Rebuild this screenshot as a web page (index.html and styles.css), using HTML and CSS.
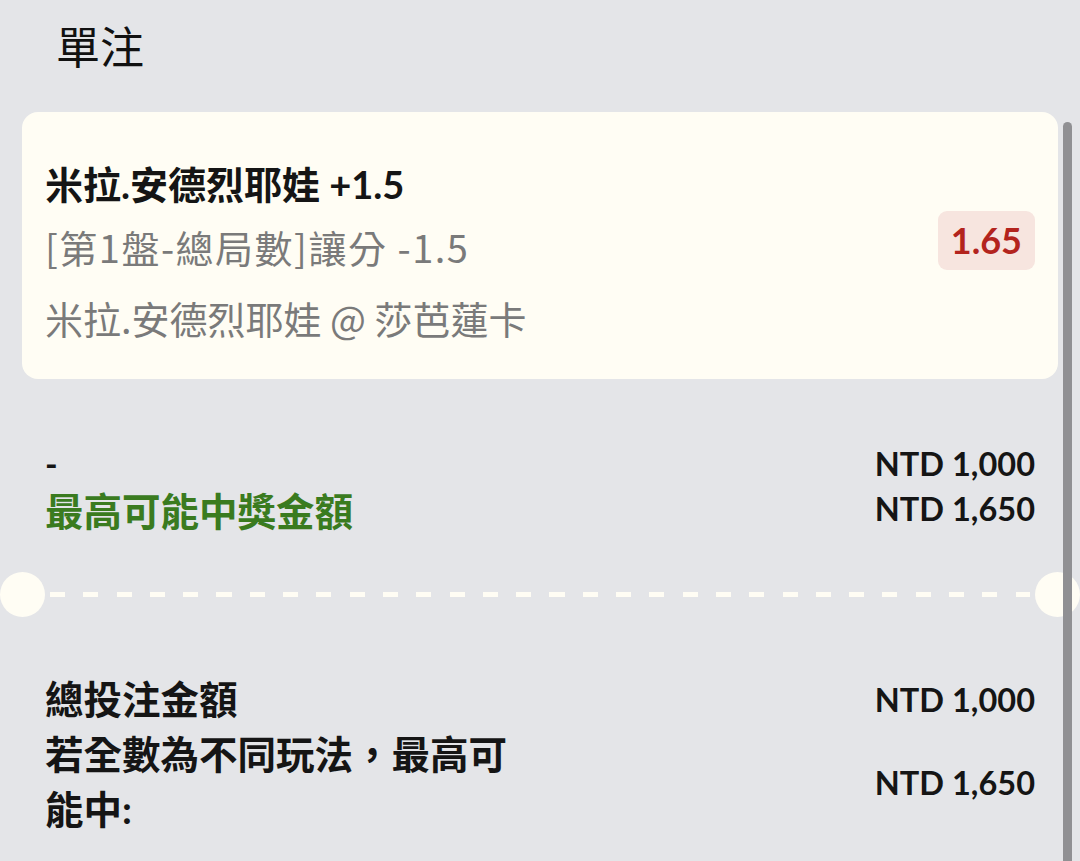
FILE: index.html
```html
<!DOCTYPE html>
<html lang="zh-Hant">
<head>
<meta charset="utf-8">
<title>單注</title>
<link rel="stylesheet" href="styles.css">
</head>
<body>
<div class="page">
  <h1 class="title">單注</h1>

  <section class="bet-card">
    <div class="bet-info">
      <div class="selection">米拉.安德烈耶娃 +1.5</div>
      <div class="market">[第1盤-總局數]讓分 -1.5</div>
      <div class="event">米拉.安德烈耶娃 @ 莎芭蓮卡</div>
    </div>
    <div class="odds">1.65</div>
  </section>

  <section class="summary">
    <div class="row">
      <span class="label dash">-</span>
      <span class="amount">NTD 1,000</span>
    </div>
    <div class="row">
      <span class="label win">最高可能中獎金額</span>
      <span class="amount">NTD 1,650</span>
    </div>
  </section>

  <div class="divider">
    <span class="notch"></span>
    <span class="dashes"></span>
    <span class="notch"></span>
  </div>

  <section class="totals">
    <div class="row total-row">
      <span class="label">總投注金額</span>
      <span class="amount">NTD 1,000</span>
    </div>
    <div class="row total-row">
      <span class="label wrap">若全數為不同玩法，最高可能中:</span>
      <span class="amount">NTD 1,650</span>
    </div>
  </section>

  <div class="scrollbar"></div>
</div>
</body>
</html>
```

FILE: styles.css
```css
html, body {
  margin: 0;
  padding: 0;
}

body {
  background: #e4e5e8;
  font-family: Lato, "Noto Sans CJK TC", sans-serif;
  color: #111;
  width: 1080px;
  height: 861px;
  overflow: hidden;
}

.page {
  position: relative;
  height: 861px;
}

.title {
  margin: 0 0 37px 0;
  padding: 15px 0 0 56px;
  font-family: "Noto Sans CJK TC", sans-serif;
  font-weight: 400;
  font-size: 44px;
  line-height: 60px;
  color: #111;
}

.bet-card {
  margin: 0 22px;
  background: #fffdf4;
  border-radius: 16px;
  padding: 44px 23px 33px 23px;
  display: flex;
  align-items: center;
  justify-content: space-between;
}

.bet-info {
  display: flex;
  flex-direction: column;
}

.selection {
  font-weight: 700;
  font-size: 38px;
  line-height: 56px;
  color: #151515;
}

.market,
.event {
  font-family: "Noto Sans CJK TC", sans-serif;
  font-weight: 400;
  font-size: 38px;
  line-height: 56px;
  color: #7a7a7a;
}

.market {
  margin-top: 7px;
  letter-spacing: 1.5px;
}

.event {
  margin-top: 15px;
}

.odds {
  background: #f7e5df;
  color: #b3241d;
  font-weight: 700;
  font-size: 36px;
  line-height: 59px;
  height: 59px;
  padding: 0 13px;
  border-radius: 9px;
  margin-top: -22px;
}

.summary {
  margin-top: 62px;
  padding: 0 45px;
}

.row {
  display: flex;
  align-items: center;
  justify-content: space-between;
}

.summary .row {
  height: 45px;
}

.label {
  font-weight: 700;
  font-size: 38.5px;
  color: #151515;
}

.dash {
  font-size: 34px;
}

.win {
  color: #3a7b1f;
}

.amount {
  font-weight: 700;
  font-size: 32.5px;
  color: #151515;
}

.divider {
  margin-top: 41px;
  height: 45px;
  display: flex;
  align-items: center;
}

.notch {
  width: 45px;
  height: 45px;
  border-radius: 50%;
  background: #fffdf4;
  flex: none;
}

.dashes {
  flex: 1;
  height: 5px;
  margin: 0 5px;
  background: repeating-linear-gradient(to right, #fffdf4 0, #fffdf4 15px, transparent 15px, transparent 33.3px);
}

.totals {
  margin-top: 54px;
  padding: 0 45px;
}

.total-row {
  min-height: 56px;
}

.total-row .label {
  line-height: 55px;
}

.wrap {
  max-width: 480px;
}

.scrollbar {
  position: absolute;
  left: 1063px;
  top: 122px;
  bottom: 0;
  width: 9px;
  background: #909093;
  border-radius: 5px 5px 0 0;
}
```
